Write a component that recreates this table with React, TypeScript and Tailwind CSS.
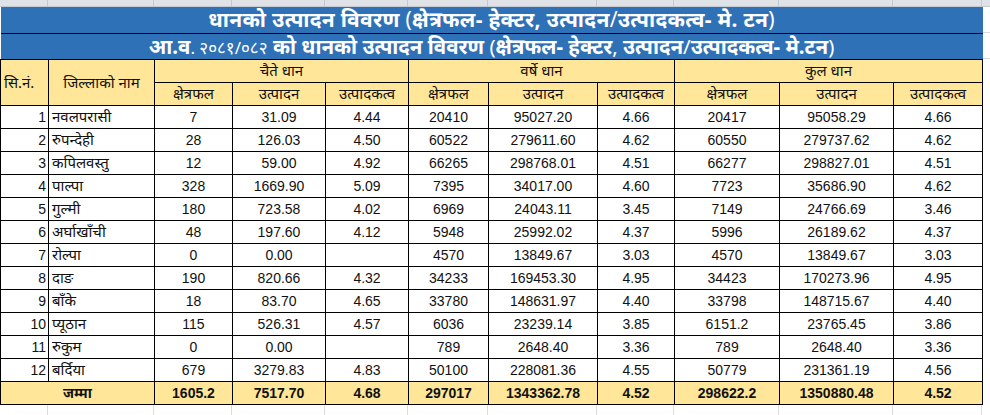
const COLS = [48, 106, 78, 93, 83, 80, 109, 77, 105, 114, 89]

type Row = [number, string, string, string, string, string, string, string, string, string, string]

const ROWS: Row[] = [
  [1, 'नवलपरासी', '7', '31.09', '4.44', '20410', '95027.20', '4.66', '20417', '95058.29', '4.66'],
  [2, 'रुपन्देही', '28', '126.03', '4.50', '60522', '279611.60', '4.62', '60550', '279737.62', '4.62'],
  [3, 'कपिलवस्तु', '12', '59.00', '4.92', '66265', '298768.01', '4.51', '66277', '298827.01', '4.51'],
  [4, 'पाल्पा', '328', '1669.90', '5.09', '7395', '34017.00', '4.60', '7723', '35686.90', '4.62'],
  [5, 'गुल्मी', '180', '723.58', '4.02', '6969', '24043.11', '3.45', '7149', '24766.69', '3.46'],
  [6, 'अर्घाखाँची', '48', '197.60', '4.12', '5948', '25992.02', '4.37', '5996', '26189.62', '4.37'],
  [7, 'रोल्पा', '0', '0.00', '', '4570', '13849.67', '3.03', '4570', '13849.67', '3.03'],
  [8, 'दाङ', '190', '820.66', '4.32', '34233', '169453.30', '4.95', '34423', '170273.96', '4.95'],
  [9, 'बाँके', '18', '83.70', '4.65', '33780', '148631.97', '4.40', '33798', '148715.67', '4.40'],
  [10, 'प्यूठान', '115', '526.31', '4.57', '6036', '23239.14', '3.85', '6151.2', '23765.45', '3.86'],
  [11, 'रुकुम', '0', '0.00', '', '789', '2648.40', '3.36', '789', '2648.40', '3.36'],
  [12, 'बर्दिया', '679', '3279.83', '4.83', '50100', '228081.36', '4.55', '50779', '231361.19', '4.56'],
]

const TOTAL = ['1605.2', '7517.70', '4.68', '297017', '1343362.78', '4.52', '298622.2', '1350880.48', '4.52']

const GROUPS = ['चैते धान', 'वर्षे धान', 'कुल धान']
const SUBS = ['क्षेत्रफल', 'उत्पादन', 'उत्पादकत्व']

const deva = "font-['Noto_Sans','Liberation_Sans',sans-serif]"
const num = "font-['Liberation_Sans',Arial,sans-serif]"

export default function App() {
  return (
    <div className="w-[990px] h-[415px] overflow-hidden bg-white text-[#111]">
      {/* excel column header strip, cut off */}
      <div className="flex h-[7px] bg-[#dfe3e8] border-b border-[#c5cad1]">
        {COLS.map((w, i) => (
          <div key={i} style={{ width: w }} className="h-full shrink-0 border-r border-[#c5cad1]" />
        ))}
        <div className="flex-1" />
      </div>

      <div className="flex">
        <table className="table-fixed border-collapse w-[982px] shrink-0">
          <colgroup>
            {COLS.map((w, i) => (
              <col key={i} style={{ width: w }} />
            ))}
          </colgroup>
          <tbody>
            <tr className="h-[26px] bg-[#2f71b6]">
              <td
                colSpan={11}
                className={`${deva} text-center text-white font-bold text-[21px] leading-none tracking-[0.3px] border-b border-black`}
              >
                धानको उत्पादन विवरण <span className="font-normal">(</span>क्षेत्रफल- हेक्टर, उत्पादन
                <span className="font-normal">/</span>उत्पादकत्व- मे. टन<span className="font-normal">)</span>
              </td>
            </tr>
            <tr className="h-[26px] bg-[#2f71b6]">
              <td
                colSpan={11}
                className={`${deva} text-center text-white font-bold text-[20.5px] leading-none border-b border-black`}
              >
                आ.व<span className="font-normal text-[17px]">. २०८१/०८२</span> को धानको उत्पादन विवरण{' '}
                <span className="font-normal">(</span>क्षेत्रफल- हेक्टर<span className="font-normal">,</span> उत्पादन
                <span className="font-normal">/</span>उत्पादकत्व- मे.टन<span className="font-normal">)</span>
              </td>
            </tr>

            <tr className={`h-[23px] bg-[#ffe699] ${deva} text-[15px] leading-none`}>
              <td rowSpan={2} className="border border-black pl-[3px] text-left">
                सि.नं.
              </td>
              <td rowSpan={2} className="border border-black text-center">
                जिल्लाको नाम
              </td>
              {GROUPS.map((g) => (
                <td key={g} colSpan={3} className="border border-black text-center">
                  {g}
                </td>
              ))}
            </tr>
            <tr className={`h-[23px] bg-[#ffe699] ${deva} text-[15px] leading-none`}>
              {GROUPS.map((g) =>
                SUBS.map((s) => (
                  <td key={g + s} className="border border-black text-center">
                    {s}
                  </td>
                )),
              )}
            </tr>

            {ROWS.map(([sn, name, ...vals]) => (
              <tr key={sn} className="h-[23px] bg-white leading-none">
                <td className={`${num} border border-black text-right pr-[2px] text-[14px]`}>{sn}</td>
                <td className={`${deva} border border-black text-left pl-[3px] text-[15px]`}>{name}</td>
                {vals.map((v, i) => (
                  <td key={i} className={`${num} border border-black text-center text-[14px]`}>
                    {v}
                  </td>
                ))}
              </tr>
            ))}

            <tr className="h-[23px] bg-[#ffe699] font-bold text-[14px] leading-none">
              <td colSpan={2} className={`${deva} border border-black text-center`}>
                जम्मा
              </td>
              {TOTAL.map((v, i) => (
                <td key={i} className={`${num} border border-black text-center`}>
                  {v}
                </td>
              ))}
            </tr>
          </tbody>
        </table>
        <div className="flex-1 flex flex-col">
          <div className="h-[26px] border-b border-[#d9d9d9]" />
          <div className="h-[26px] border-b border-[#d9d9d9]" />
        </div>
      </div>

      {/* empty sheet row below */}
      <div className="flex h-[12px]">
        {COLS.map((w, i) => (
          <div key={i} style={{ width: w }} className="h-full shrink-0 border-r border-[#dcdcdc]" />
        ))}
      </div>
    </div>
  )
}
